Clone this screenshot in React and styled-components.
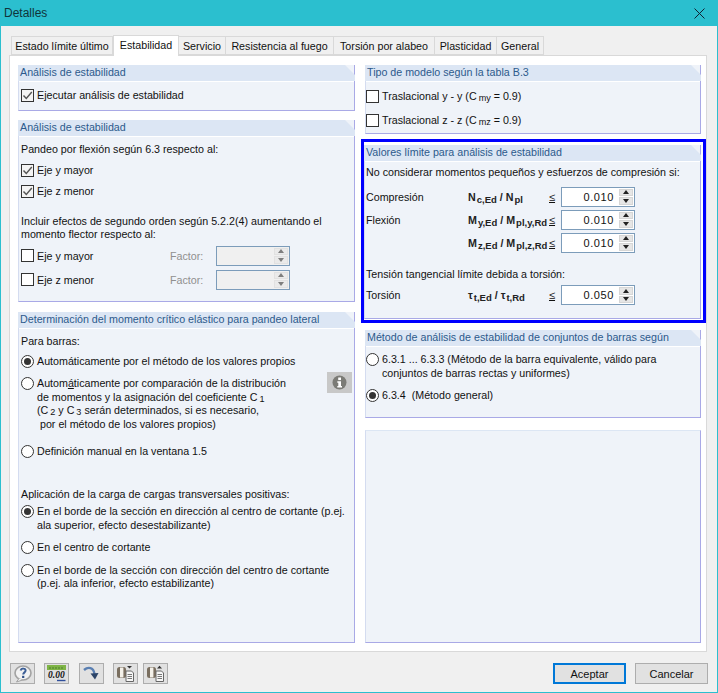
import React from 'react';
import styled, { createGlobalStyle } from 'styled-components';

const Global = createGlobalStyle`
  html, body { margin: 0; padding: 0; background: #f0f0f0; }
  * { box-sizing: border-box; }
`;

const Window = styled.div`
  width: 718px;
  height: 693px;
  background: #f0f0f0;
  border: 1px solid #2bbfcf;
  border-top: 0;
  font-family: "Liberation Sans", sans-serif;
  font-size: 10.7px;
  color: #111;
  display: flex;
  flex-direction: column;
  overflow: hidden;
`;
const TitleBar = styled.div`
  height: 26px;
  flex: none;
  margin: 0 -1px;
  background: #2bbfcf;
  display: flex;
  align-items: center;
  justify-content: space-between;
  padding: 0 13px 0 4px;
  font-size: 12px;
  color: #10343a;
`;
const TabRow = styled.div`
  display: flex;
  align-items: flex-end;
  height: 29px;
  flex: none;
  padding-left: 10px;
`;
const Tab = styled.div`
  width: ${p => p.$w}px;
  height: ${p => (p.$active ? 21 : 19)}px;
  margin-bottom: ${p => (p.$active ? -1 : 0)}px;
  background: ${p => (p.$active ? '#fff' : '#f0f0f0')};
  border: 1px solid #d9d9d9;
  border-bottom: ${p => (p.$active ? 0 : '1px solid #d9d9d9')};
  margin-left: ${p => (p.$active || p.$first ? 0 : -1)}px;
  position: relative;
  z-index: ${p => (p.$active ? 1 : 0)};
  display: flex;
  align-items: center;
  justify-content: center;
  white-space: nowrap;
  padding-bottom: ${p => (p.$active ? 3 : 0)}px;
`;
const Sheet = styled.div`
  margin: 0 10px 0 8px;
  height: 597px;
  flex: none;
  background: #fff;
  border: 1px solid #d9d9d9;
  padding: 9px 4px 7px 8px;
  display: grid;
  grid-template-columns: 337px 345px;
  column-gap: 6px;
`;
const Column = styled.div`
  display: flex;
  flex-direction: column;
  min-height: 0;
`;
const Highlight = styled.div`
  border: 3px solid #0000ff;
  padding: 3px 2px 1px 0;
  margin: 5px 0 7px 0;
`;
const Group = styled.section`
  height: ${p => p.$h}px;
  margin-top: ${p => p.$top || 0}px;
  margin-left: ${p => p.$inset || 0}px;
  margin-right: ${p => p.$right || 0}px;
  flex: none;
  display: flex;
  flex-direction: column;
  background: #eff3f9;
  border-top: ${p => (p.$blank ? '1px solid #dce6f4' : 0)};
  border-right: 1px solid #a9a9e6;
  border-bottom: 1px solid #a9a9e6;
  border-left: 1px solid #d4dcf0;
`;
const GroupTitle = styled.h3`
  margin: 0 -1px 0 -1px;
  height: 16px;
  flex: none;
  font-size: 10.7px;
  font-weight: normal;
  color: #2c5a8c;
  background: #dce6f4;
  line-height: 15px;
  padding-left: 2px;
  clip-path: polygon(0 0, calc(100% - 10px) 0, 100% 10px, 100% 100%, 0 100%);
  white-space: nowrap;
`;
const GroupBody = styled.div`
  border-top: 1px solid #fff;
  padding: 0 ${p => p.$pad ?? 2}px;
  flex: 1;
  min-height: 0;
`;
const Line = styled.div`
  margin-top: ${p => p.$top || 0}px;
  line-height: 13.5px;
  white-space: nowrap;
`;
const OptionRow = styled.div`
  display: flex;
  align-items: flex-start;
  margin-top: ${p => p.$top || 0}px;
  line-height: 13.5px;
  white-space: nowrap;
`;
const CheckBox = styled.span`
  width: 13px;
  height: 13px;
  flex: none;
  margin-right: 3px;
  background: ${p => (p.$on ? '#f4f4f4' : '#fff')};
  border: 1px solid #333;
  display: flex;
  align-items: center;
  justify-content: center;
`;
const Radio = styled.span`
  width: 13px;
  height: 13px;
  flex: none;
  margin-right: 3px;
  border-radius: 50%;
  background: #fff;
  border: 1px solid #333;
  display: flex;
  align-items: center;
  justify-content: center;
  &::after {
    content: '';
    display: ${p => (p.$on ? 'block' : 'none')};
    width: 7px;
    height: 7px;
    border-radius: 50%;
    background: #333;
  }
`;
const Sub = styled.sub`
  font-size: 0.85em;
  vertical-align: -1px;
  line-height: 0;
  margin-left: 2px;
`;
const FactorRow = styled.div`
  display: flex;
  align-items: center;
  height: 20px;
  margin-top: ${p => p.$top || 0}px;
`;
const OptionLabel = styled.div`
  width: 149px;
  display: flex;
  align-items: center;
  white-space: nowrap;
`;
const FactorLabel = styled.span`
  width: 46px;
  color: #8f8f8f;
`;
const Spinner = styled.div`
  width: 74px;
  height: 20px;
  flex: none;
  border: 1px solid #7c9cba;
  background: ${p => (p.$off ? '#f0f0f0' : '#fff')};
  display: flex;
  justify-content: flex-end;
  align-items: stretch;
  padding: 1px;
`;
const SpinValue = styled.span`
  flex: 1;
  text-align: right;
  padding-right: 5px;
  line-height: 17px;
  font-size: 11px;
  letter-spacing: 0.6px;
`;
const SpinColumn = styled.span`
  width: 14px;
  display: flex;
  flex-direction: column;
  gap: 1px;
  opacity: ${p => (p.$off ? 0.55 : 1)};
`;
const SpinButton = styled.span`
  flex: 1;
  background: #e6e6e6;
  border: 1px solid #d6d6d6;
  display: flex;
  align-items: center;
  justify-content: center;
`;
const Arrow = styled.span`
  width: 0;
  height: 0;
  border-left: 3.5px solid transparent;
  border-right: 3.5px solid transparent;
  ${p => (p.$down ? 'border-top: 4px solid #222;' : 'border-bottom: 4px solid #222;')}
`;
const LimitRow = styled.div`
  display: grid;
  grid-template-columns: 102px 81px 12px 74px;
  align-items: center;
  height: 20px;
  margin-top: ${p => p.$top || 0}px;
`;
const Formula = styled.span`
  font-weight: bold;
  font-size: 10.7px;
  white-space: nowrap;
  color: #222;
  & sub { font-size: 9.5px; margin-left: 1px; vertical-align: -2px; line-height: 0; }
`;
const Leq = styled.span`
  text-decoration: underline;
  font-size: 11px;
`;
const InfoRow = styled.div`
  display: flex;
  justify-content: space-between;
  align-items: flex-start;
  margin-top: ${p => p.$top || 0}px;
`;
const InfoButton = styled.div`
  width: 25px;
  height: 21px;
  flex: none;
  margin-top: -5px;
  background: #c8c8c8;
  display: flex;
  align-items: center;
  justify-content: center;
`;
const Footer = styled.div`
  flex: 1;
  padding: 11px 9px 0 9px;
  display: flex;
  justify-content: space-between;
  align-items: flex-start;
`;
const ToolGroup = styled.div`
  display: flex;
  gap: 9px;
`;
const ToolButton = styled.div`
  width: 25px;
  height: 21px;
  margin-left: ${p => p.$shift || 0}px;
  background: #e1e1e1;
  border: 1px solid #adadad;
  display: flex;
  align-items: center;
  justify-content: center;
`;
const ActionGroup = styled.div`
  display: flex;
  gap: 9px;
`;
const ActionButton = styled.button`
  width: 73px;
  height: 21px;
  padding: 0;
  font: inherit;
  font-size: 11px;
  color: #111;
  background: #e1e1e1;
  border: ${p => (p.$primary ? '2px solid #0078d7' : '1px solid #adadad')};
`;

const Tick = () => (
  <svg width="11" height="11" viewBox="0 0 11 11">
    <path d="M1.5 5.5 L4.3 8.5 L9.8 2" fill="none" stroke="#555" strokeWidth="1.4" />
  </svg>
);

const Check = ({ on, children, top }) => (
  <OptionRow $top={top}>
    <CheckBox $on={on}>{on && <Tick />}</CheckBox>
    <span>{children}</span>
  </OptionRow>
);

const Option = ({ on, children, top }) => (
  <OptionRow $top={top}>
    <Radio $on={on} />
    <div>{children}</div>
  </OptionRow>
);

const Spin = ({ value, off }) => (
  <Spinner $off={off}>
    <SpinValue>{value}</SpinValue>
    <SpinColumn $off={off}>
      <SpinButton><Arrow /></SpinButton>
      <SpinButton><Arrow $down /></SpinButton>
    </SpinColumn>
  </Spinner>
);

const Factor = ({ label, top }) => (
  <FactorRow $top={top}>
    <OptionLabel>
      <CheckBox />
      <span>{label}</span>
    </OptionLabel>
    <FactorLabel>Factor:</FactorLabel>
    <Spin off />
  </FactorRow>
);

const Limit = ({ label, formula, value, top }) => (
  <LimitRow $top={top}>
    <span>{label}</span>
    <Formula>{formula}</Formula>
    <Leq>≤</Leq>
    <Spin value={value} />
  </LimitRow>
);

const HelpIcon = () => (
  <svg width="19" height="18" viewBox="0 0 19 18">
    <ellipse cx="10" cy="8" rx="8" ry="7" fill="#f2f2f2" stroke="#a2a2a2" strokeWidth="1.6" />
    <path d="M6 13.5 L3.5 17 L9.5 15" fill="#f2f2f2" stroke="#a2a2a2" />
    <path d="M7.6 5.4 C8.2 3 12.6 3 12.6 5.6 C12.6 7.4 10.2 7.4 10.2 9.6" fill="none" stroke="#3d5f96" strokeWidth="2" />
    <rect x="9.1" y="10.8" width="2.2" height="2.2" fill="#2f4f86" />
  </svg>
);

const DecimalIcon = () => (
  <svg width="19" height="17" viewBox="0 0 19 17">
    <rect x="0" y="0" width="19" height="5" fill="#7fb446" />
    <path d="M3 2V4M6 2V4M9 2V4M12 2V4M15 2V4" stroke="#4d7f2a" />
    <text x="1" y="13" fontFamily="Liberation Serif" fontStyle="italic" fontWeight="bold" fontSize="9.5" fill="#111">0.00</text>
    <path d="M10 15.5H18.5" stroke="#2f4f9c" strokeWidth="1.4" />
  </svg>
);

const ArrowIcon = () => (
  <svg width="17" height="17" viewBox="0 0 17 17">
    <path d="M1 5 C5 1.5 10.5 2 11.5 9" fill="none" stroke="#5a7fb2" strokeWidth="2.4" />
    <path d="M7.5 8.5 L15.5 8 L12 14.5 Z" fill="#2c4468" />
  </svg>
);

const CopyIcon = ({ up }) => (
  <svg width="19" height="17" viewBox="0 0 19 17">
    <rect x="1" y="2" width="9" height="11" rx="2.5" fill="#7a6f60" />
    <rect x="4" y="2.5" width="3.4" height="10" fill="#f4f1ea" />
    <path d="M10 6H15.5L17.5 8V16.5H10Z" fill="#f6f6f6" stroke="#666" />
    <path d="M11.5 9.5H16M11.5 11.5H16M11.5 13.5H16" stroke="#777" />
    <path d={up ? 'M11 3.5 L13.5 0.8 L16 3.5Z' : 'M11 1H16L13.5 3.6Z'} fill="#333" />
  </svg>
);

const InfoIcon = () => (
  <svg width="15" height="15" viewBox="0 0 15 15">
    <circle cx="7.5" cy="7.5" r="7" fill="#7b7b76" />
    <rect x="6.2" y="2.5" width="2.8" height="2.6" fill="#fff" />
    <path d="M5.3 6.3H9V11H10V12.5H5.3V11H6.3V7.7H5.3Z" fill="#fff" />
  </svg>
);

const App = () => (
  <Window>
    <Global />
    <TitleBar>
      <span>Detalles</span>
      <svg width="11" height="11" viewBox="0 0 11 11">
        <path d="M0.5 0.5 L10.5 10.5 M10.5 0.5 L0.5 10.5" stroke="#123" strokeWidth="1" />
      </svg>
    </TitleBar>
    <TabRow>
      <Tab $w={102} $first>Estado límite último</Tab>
      <Tab $w={66} $active>Estabilidad</Tab>
      <Tab $w={48}>Servicio</Tab>
      <Tab $w={109}>Resistencia al fuego</Tab>
      <Tab $w={102}>Torsión por alabeo</Tab>
      <Tab $w={63}>Plasticidad</Tab>
      <Tab $w={48}>General</Tab>
    </TabRow>
    <Sheet>
      <Column>
        <Group $h={46}>
          <GroupTitle>Análisis de estabilidad</GroupTitle>
          <GroupBody>
            <Check on top={7}>Ejecutar análisis de estabilidad</Check>
          </GroupBody>
        </Group>
        <Group $h={182} $top={9}>
          <GroupTitle>Análisis de estabilidad</GroupTitle>
          <GroupBody>
            <Line $top={6}>Pandeo por flexión según 6.3 respecto al:</Line>
            <Check on top={7}>Eje y mayor</Check>
            <Check on top={8}>Eje z menor</Check>
            <Line $top={16}>Incluir efectos de segundo orden según 5.2.2(4) aumentando el</Line>
            <Line>momento flector respecto al:</Line>
            <Factor label="Eje y mayor" top={4} />
            <Factor label="Eje z menor" top={4} />
          </GroupBody>
        </Group>
        <Group $h={331} $top={10}>
          <GroupTitle>Determinación del momento crítico elástico para pandeo lateral</GroupTitle>
          <GroupBody>
            <Line $top={6}>Para barras:</Line>
            <Option on top={6}>Automáticamente por el método de los valores propios</Option>
            <InfoRow $top={9}>
              <Option>
                Autom<u>á</u>ticamente por comparación de la distribución<br />
                de momentos y la asignación del coeficiente C<Sub>1</Sub><br />
                (C<Sub>2</Sub> y C<Sub>3</Sub> serán determinados, si es necesario,<br />
                &nbsp;por el método de los valores propios)
              </Option>
              <InfoButton><InfoIcon /></InfoButton>
            </InfoRow>
            <Option top={14}>Definición manual en la ventana 1.5</Option>
            <Line $top={29}>Aplicación de la carga de cargas transversales positivas:</Line>
            <Option on top={4}>
              En el borde de la sección en dirección al centro de cortante (p.ej.<br />
              ala superior, efecto desestabilizante)
            </Option>
            <Option top={9}>En el centro de cortante</Option>
            <Option top={9}>
              En el borde de la sección con dirección del centro de cortante<br />
              (p.ej. ala inferior, efecto estabilizante)
            </Option>
          </GroupBody>
        </Group>
      </Column>
      <Column>
        <Group $h={69} $inset={4} $right={5}>
          <GroupTitle>Tipo de modelo según la tabla B.3</GroupTitle>
          <GroupBody $pad={0}>
            <Check top={8}>Traslacional y - y (C<Sub>my</Sub> = 0.9)</Check>
            <Check top={10}>Traslacional z - z (C<Sub>mz</Sub> = 0.9)</Check>
          </GroupBody>
        </Group>
        <Highlight>
          <Group $h={174}>
            <GroupTitle>Valores límite para análisis de estabilidad</GroupTitle>
            <GroupBody $pad={1}>
              <Line $top={4}>No considerar momentos pequeños y esfuerzos de compresión si:</Line>
              <Limit label="Compresión" top={7} formula={<>N<sub>c,Ed</sub> / N<sub>pl</sub></>} value="0.010" />
              <Limit label="Flexión" top={3} formula={<>M<sub>y,Ed</sub> / M<sub>pl,y,Rd</sub></>} value="0.010" />
              <Limit top={3} formula={<>M<sub>z,Ed</sub> / M<sub>pl,z,Rd</sub></>} value="0.010" />
              <Line $top={15}>Tensión tangencial límite debida a torsión:</Line>
              <Limit label="Torsión" top={4} formula={<>τ<sub>t,Ed</sub> / τ<sub>t,Rd</sub></>} value="0.050" />
            </GroupBody>
          </Group>
        </Highlight>
        <Group $h={88} $inset={4} $right={5}>
          <GroupTitle>Método de análisis de estabilidad de conjuntos de barras según</GroupTitle>
          <GroupBody $pad={0}>
            <Option top={6}>
              6.3.1 ... 6.3.3 (Método de la barra equivalente, válido para<br />
              conjuntos de barras rectas y uniformes)
            </Option>
            <Option on top={9}>6.3.4 &nbsp;(Método general)</Option>
          </GroupBody>
        </Group>
        <Group $h={213} $top={12} $inset={4} $right={5} $blank />
      </Column>
    </Sheet>
    <Footer>
      <ToolGroup>
        <ToolButton><HelpIcon /></ToolButton>
        <ToolButton><DecimalIcon /></ToolButton>
        <ToolButton $shift={1}><ArrowIcon /></ToolButton>
        <ToolButton><CopyIcon /></ToolButton>
        <ToolButton $shift={-4}><CopyIcon up /></ToolButton>
      </ToolGroup>
      <ActionGroup>
        <ActionButton $primary>Aceptar</ActionButton>
        <ActionButton>Cancelar</ActionButton>
      </ActionGroup>
    </Footer>
  </Window>
);

export default App;
